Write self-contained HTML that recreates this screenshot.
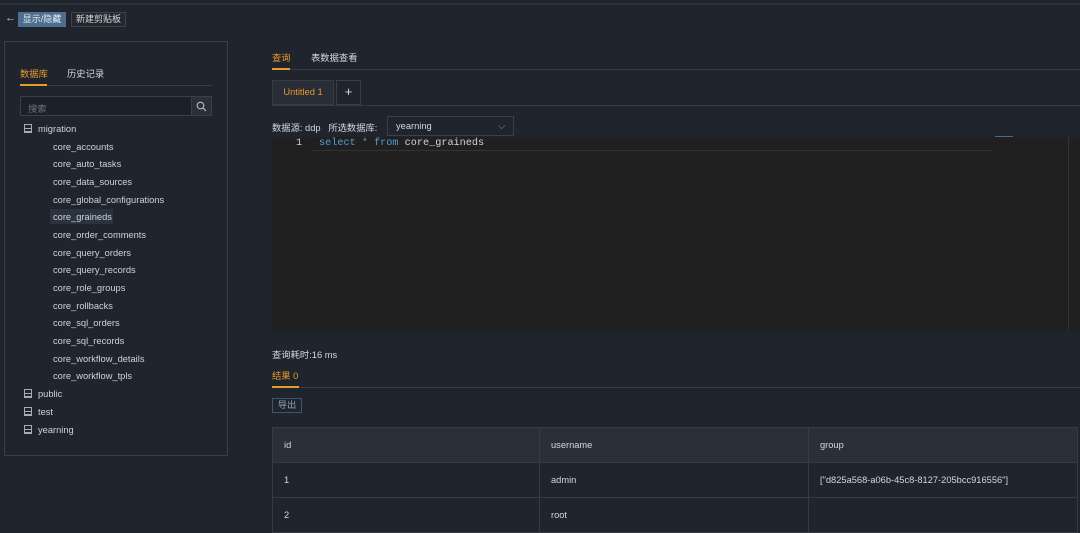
<!DOCTYPE html>
<html><head><meta charset="utf-8"><style>
*{box-sizing:border-box;margin:0;padding:0}
body{width:1080px;height:529px;overflow:hidden;background:#1f242d;color:#d5d8dc;font-family:"Liberation Sans","Noto Sans CJK SC",sans-serif;font-size:9.3px;position:relative}
.a{position:absolute;white-space:nowrap}
.tree div{position:absolute;left:53px;font-size:9.3px;color:#d0d3d8}
.db{position:absolute;left:24px;font-size:9.3px;color:#d0d3d8}
.db span{display:inline-block;width:8px;height:9px;border:1px solid #aab;margin-right:6px;vertical-align:-1px;background:linear-gradient(#aab,#aab) 0 3px/100% 1px no-repeat,linear-gradient(#aab,#aab) 0 6px/100% 1px no-repeat}
td{border-right:1px solid #353b45;border-bottom:1px solid #353b45;padding-left:11px;font-size:9.3px;color:#d5d8dc}
</style></head><body>
<div class="a" style="left:0;top:3px;width:1080px;height:2px;background:#2c323c"></div>
<div class="a" style="left:5px;top:12px;font-size:11px;color:#ccc">←</div>
<div class="a" style="left:18px;top:12px;width:48px;height:15px;background:#4e6f8f;color:#e8eef4;font-size:9px;line-height:15px;text-align:center">显示/隐藏</div>
<div class="a" style="left:71px;top:12px;width:55px;height:15px;border:1px solid #3d434c;background:#23272e;font-size:9px;line-height:13px;text-align:center">新建剪贴板</div>

<div class="a" style="left:4px;top:41px;width:224px;height:415px;border:1px solid #3a404a"></div>
<div class="a" style="left:20px;top:66px;color:#e89a2c">数据库</div>
<div class="a" style="left:67px;top:66px">历史记录</div>
<div class="a" style="left:20px;top:85px;width:192px;height:1px;background:#3a404a"></div>
<div class="a" style="left:20px;top:84px;width:27px;height:2px;background:#e89a2c"></div>
<div class="a" style="left:20px;top:96px;width:192px;height:20px;border:1px solid #3a404a;background:#1c2028"></div>
<div class="a" style="left:191px;top:96px;width:21px;height:20px;border:1px solid #3a404a;background:#2a2f38"></div>
<svg class="a" style="left:196px;top:101px" width="11" height="11"><circle cx="4.5" cy="4.5" r="3.3" fill="none" stroke="#bbb" stroke-width="1.1"/><line x1="7" y1="7" x2="10" y2="10" stroke="#bbb" stroke-width="1.2"/></svg>
<div class="a" style="left:28px;top:101px;color:#6c727b">搜索</div>
<div class="db a" style="top:124px"><span></span>migration</div>
<div class="a" style="left:50px;top:209px;width:63px;height:15px;background:#2c3340"></div>
<div class="tree">
<div style="top:142px">core_accounts</div>
<div style="top:159px">core_auto_tasks</div>
<div style="top:177px">core_data_sources</div>
<div style="top:195px">core_global_configurations</div>
<div style="top:212px">core_graineds</div>
<div style="top:230px">core_order_comments</div>
<div style="top:248px">core_query_orders</div>
<div style="top:265px">core_query_records</div>
<div style="top:283px">core_role_groups</div>
<div style="top:301px">core_rollbacks</div>
<div style="top:318px">core_sql_orders</div>
<div style="top:336px">core_sql_records</div>
<div style="top:354px">core_workflow_details</div>
<div style="top:371px">core_workflow_tpls</div>
</div>
<div class="db a" style="top:389px"><span></span>public</div>
<div class="db a" style="top:407px"><span></span>test</div>
<div class="db a" style="top:425px"><span></span>yearning</div>

<div class="a" style="left:272px;top:50px;color:#e89a2c">查询</div>
<div class="a" style="left:311px;top:50px">表数据查看</div>
<div class="a" style="left:272px;top:69px;width:808px;height:1px;background:#353b45"></div>
<div class="a" style="left:272px;top:68px;width:18px;height:2px;background:#e89a2c"></div>
<div class="a" style="left:272px;top:80px;width:62px;height:25px;background:#282d36;border:1px solid #353b45;color:#e89a2c;line-height:23px;text-align:center">Untitled 1</div>
<div class="a" style="left:336px;top:80px;width:25px;height:25px;background:#1f242d;border:1px solid #3a404a;line-height:21px;text-align:center;font-size:13px">+</div>
<div class="a" style="left:272px;top:105px;width:808px;height:1px;background:#353b45"></div>
<div class="a" style="left:272px;top:120px">数据源: ddp&nbsp;&nbsp; 所选数据库:</div>
<div class="a" style="left:387px;top:116px;width:127px;height:20px;border:1px solid #3a404a;padding-left:8px;line-height:18px">yearning<span style="position:absolute;right:8px;color:#888">⌵</span></div>
<div class="a" style="left:272px;top:137px;width:808px;height:194px;background:#202020"></div>
<div class="a" style="left:312px;top:150px;width:680px;height:1px;background:#333"></div>
<div class="a" style="left:995px;top:136px;width:18px;height:1px;background:#4a6c8f"></div>
<div class="a" style="left:1068px;top:137px;width:1px;height:194px;background:#333"></div>
<div class="a" style="left:296px;top:138px;font-family:'Liberation Mono',monospace;font-size:10.2px;color:#ccc">1</div>
<div class="a" style="left:319px;top:138px;font-family:'Liberation Mono',monospace;font-size:10.2px;color:#d4d4d4"><span style="color:#569cd6">select</span> <span style="color:#888">*</span> <span style="color:#569cd6">from</span> core_graineds</div>
<div class="a" style="left:272px;top:347px">查询耗时:16 ms</div>
<div class="a" style="left:272px;top:368px;color:#e89a2c">结果 0</div>
<div class="a" style="left:272px;top:387px;width:808px;height:1px;background:#353b45"></div>
<div class="a" style="left:272px;top:386px;width:27px;height:2px;background:#e89a2c"></div>
<div class="a" style="left:272px;top:398px;width:30px;height:15px;border:1px solid #3d5770;color:#8fa0b2;line-height:13px;text-align:center">导出</div>
<table class="a" style="left:272px;top:427px;width:806px;border-collapse:collapse;border:1px solid #353b45">
<tr style="height:35px;background:#2a2f38"><td style="width:267px">id</td><td style="width:269px">username</td><td>group</td></tr>
<tr style="height:35px;background:#1f242d"><td>1</td><td>admin</td><td>["d825a568-a06b-45c8-8127-205bcc916556"]</td></tr>
<tr style="height:35px;background:#1f242d"><td>2</td><td>root</td><td></td></tr>
</table>
</body></html>
